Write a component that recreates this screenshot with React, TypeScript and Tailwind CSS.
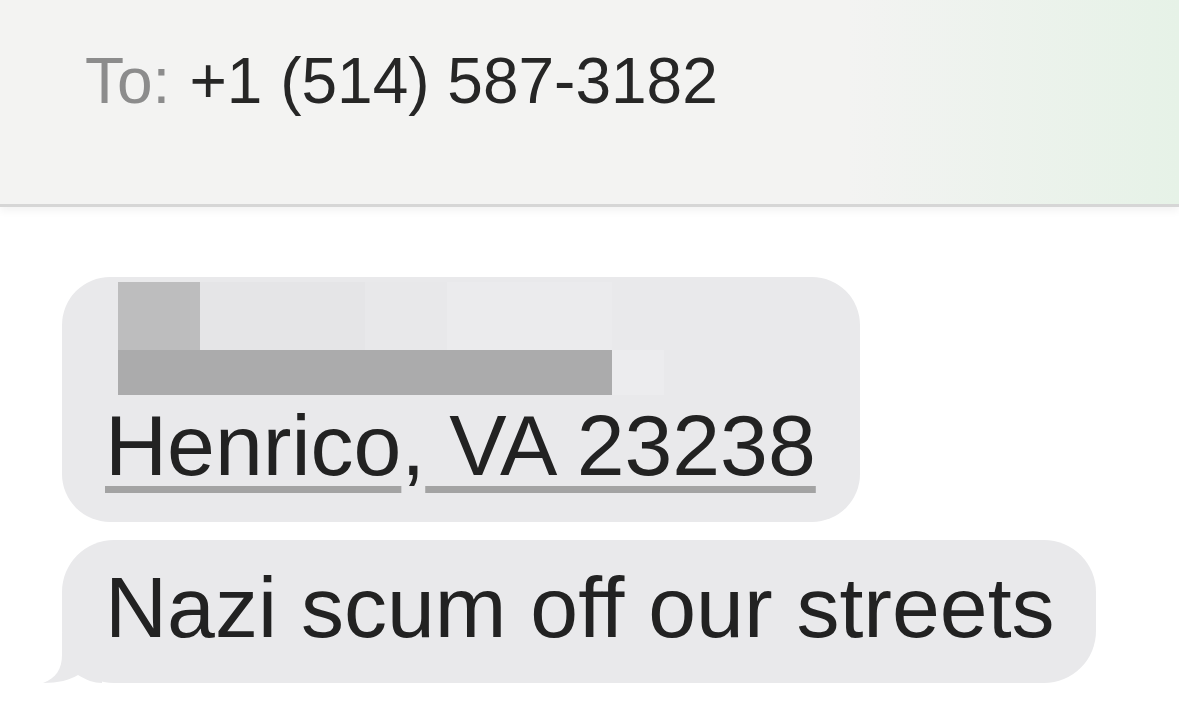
export default function App() {
    return (
        <div className="w-[1179px] h-[717px] bg-white overflow-hidden font-['Liberation_Sans',Arial,sans-serif]">
            <div className="relative h-[207px] border-b-[3px] border-[#d6d6d6] bg-[linear-gradient(90deg,#f3f3f2_0%,#f3f3f2_72%,#e6f2e7_100%)] pl-[85px] pt-[45px] shadow-[0_4px_8px_rgba(0,0,0,0.05)]">
                <div className="flex items-baseline text-[64px] leading-[72px]">
                    <span className="text-[#8c8c8c]">To:</span>
                    <span className="ml-[19px] text-[#262626]">+1 (514) 587-3182</span>
                </div>
            </div>

            <div className="flex flex-col items-start gap-[18px] pl-[62px] pt-[70px] text-[86px] leading-[96px] text-[#222222]">
                <div className="w-fit rounded-[48px] bg-[#e9e9eb] pl-[43px] pr-[44px] pt-[5px] pb-[29px]">
                    <div className="ml-[13px] flex flex-col">
                        <div className="flex h-[68px]">
                            <div className="w-[82px] bg-[#bdbdbe]" />
                            <div className="w-[165px] bg-[#e5e5e7]" />
                            <div className="w-[82px] bg-[#e8e8ea]" />
                            <div className="w-[165px] bg-[#ebebed]" />
                        </div>
                        <div className="flex h-[45px]">
                            <div className="w-[494px] bg-[#ababac]" />
                            <div className="w-[52px] bg-[#ececee]" />
                        </div>
                    </div>
                    <div className="mt-[2px] whitespace-pre">
                        <span className="underline decoration-[#a3a3a3] decoration-[7px] underline-offset-[11px]">Henrico</span>
                        <span>,</span>
                        <span className="underline decoration-[#a3a3a3] decoration-[7px] underline-offset-[11px]"> VA 23238</span>
                    </div>
                </div>

                <div className="relative w-fit rounded-[52px] bg-[#e9e9eb] pl-[43px] pr-[41px] pt-[19px] pb-[28px]">
                    <svg className="absolute left-[-20px] bottom-0" width="60" height="50" viewBox="0 0 60 50">
                        <path d="M20 0 V22 C20 36 14 45 1 50 C16 50 28 47 36 42 C44 47 52 50 60 50 V0 Z" fill="#e9e9eb" />
                    </svg>
                    <span className="relative">Nazi scum off our streets</span>
                </div>
            </div>
        </div>
    )
}
